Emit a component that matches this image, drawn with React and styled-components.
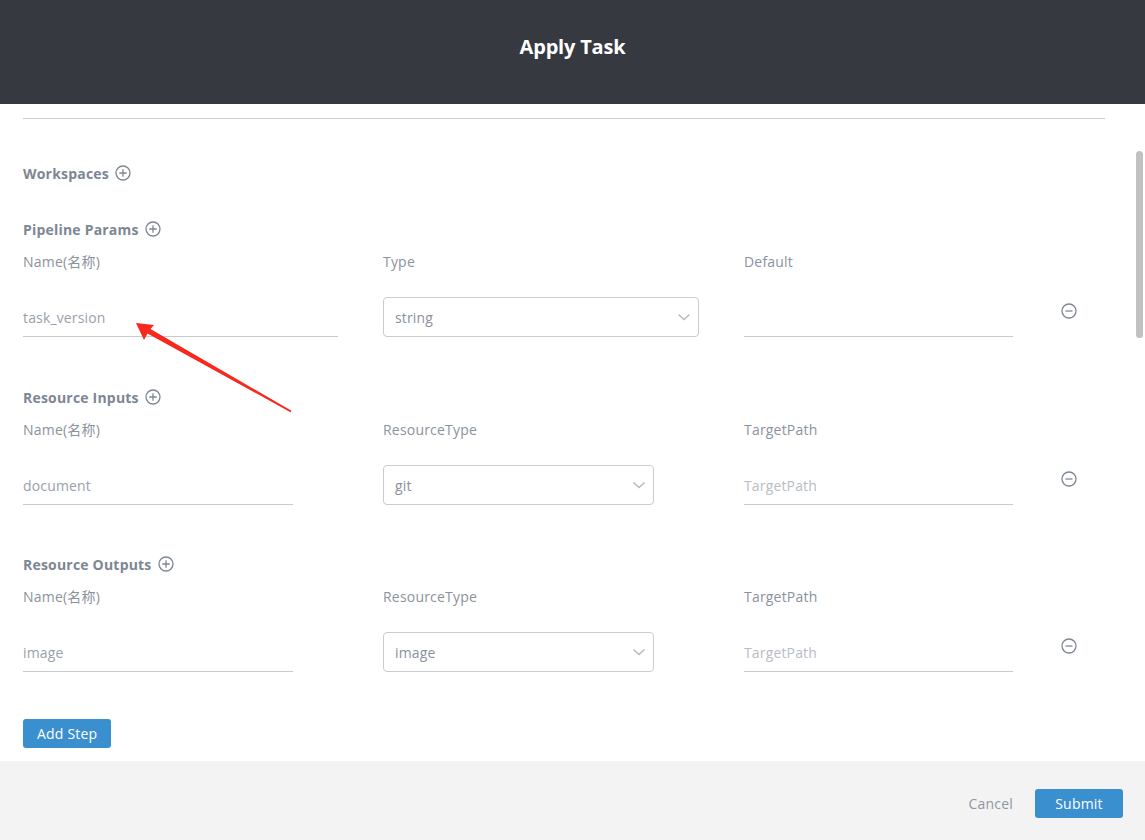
import React from "react";
import styled, { createGlobalStyle } from "styled-components";

const Global = createGlobalStyle`
  html, body { margin: 0; padding: 0; }
  body {
    font-family: "Open Sans", "Noto Sans CJK SC", "Noto Sans", sans-serif;
    background: #ffffff;
  }
  * { box-sizing: border-box; }
`;

const Page = styled.div`
  position: relative;
  width: 1145px;
  height: 840px;
  display: flex;
  flex-direction: column;
  overflow: hidden;
`;

const Header = styled.header`
  height: 104px;
  background: #36393f;
  display: flex;
  align-items: center;
  justify-content: center;
  padding-bottom: 12px;
`;

const Title = styled.h1`
  margin: 0;
  color: #ffffff;
  font-size: 20px;
  font-weight: 700;
  letter-spacing: -0.2px;
`;

const Body = styled.main`
  position: relative;
  height: 657px;
  background: #fff;
  padding: 14px 40px 0 23px;
`;

const Divider = styled.div`
  height: 1px;
  background: #c9ccd2;
  margin-bottom: 44px;
`;

const Section = styled.section`
  margin-bottom: ${(p) => p.$gap}px;
`;

const Heading = styled.div`
  display: flex;
  align-items: center;
  gap: 6px;
  height: 20px;
  font-size: 14px;
  font-weight: 700;
  letter-spacing: 0.2px;
  color: #7d8693;
  margin-bottom: 13px;
`;

const Grid = styled.div`
  display: grid;
  grid-template-columns: 360px 361px 317px 16px;
  align-items: center;
`;

const Label = styled.div`
  font-size: 14px;
  line-height: 20px;
  letter-spacing: 0.2px;
  color: #8b929d;
  margin-bottom: 25px;
`;

const LineInput = styled.div`
  width: ${(p) => p.$w}px;
  height: 40px;
  border-bottom: 1px solid #c7cad0;
  display: flex;
  align-items: center;
  font-size: 14px;
  letter-spacing: 0.15px;
  color: ${(p) => (p.$placeholder ? "#b8bcc3" : "#9aa0a9")};
  padding-top: 1px;
`;

const Select = styled.div`
  width: ${(p) => p.$w}px;
  height: 40px;
  border: 1px solid #c9ccd2;
  border-radius: 4px;
  display: flex;
  align-items: center;
  justify-content: space-between;
  padding: 0 7px 0 11px;
  font-size: 14px;
  letter-spacing: 0.15px;
  color: #8a919c;
`;

const RemoveBtn = styled.span`
  display: flex;
  align-self: start;
  margin-top: 6px;
  color: #7d8693;
`;

const PrimaryButton = styled.button`
  height: 29px;
  padding: 0 14px;
  border: none;
  border-radius: 3px;
  background: #3a8fcf;
  color: #fff;
  font-family: inherit;
  font-size: 14px;
  letter-spacing: 0.2px;
`;

const Footer = styled.footer`
  flex: 1;
  background: #f3f3f3;
  display: flex;
  align-items: center;
  justify-content: flex-end;
  gap: 22px;
  padding: 5px 22px 0 0;
`;

const CancelText = styled.span`
  font-size: 14px;
  letter-spacing: 0.2px;
  color: #8f96a0;
`;

const SubmitButton = styled(PrimaryButton)`
  width: 88px;
  padding: 0;
`;

const Thumb = styled.div`
  position: absolute;
  right: 2px;
  top: 47px;
  width: 7px;
  height: 187px;
  border-radius: 4px;
  background: #c1c1c1;
`;

const Overlay = styled.svg`
  position: absolute;
  left: 0;
  top: 0;
  pointer-events: none;
`;

const PlusIcon = () => (
  <svg width="16" height="16" viewBox="0 0 16 16">
    <circle cx="8" cy="8" r="7" fill="none" stroke="currentColor" strokeWidth="1.3" />
    <path d="M8 4.3v7.4M4.3 8h7.4" stroke="currentColor" strokeWidth="1.3" />
  </svg>
);

const MinusIcon = () => (
  <svg width="16" height="16" viewBox="0 0 16 16">
    <circle cx="8" cy="8" r="7" fill="none" stroke="currentColor" strokeWidth="1.3" />
    <path d="M4.5 8h7" stroke="currentColor" strokeWidth="1.3" />
  </svg>
);

const Chevron = () => (
  <svg width="14" height="10" viewBox="0 0 14 10">
    <path d="M1.5 2.5l5.5 5 5.5-5" fill="none" stroke="#b7bcc4" strokeWidth="1.6" />
  </svg>
);

const rows = [
  {
    title: "Pipeline Params",
    labels: ["Name(名称)", "Type", "Default"],
    name: "task_version",
    nameW: 315,
    select: "string",
    selW: 316,
    third: "",
    gap: 50,
  },
  {
    title: "Resource Inputs",
    labels: ["Name(名称)", "ResourceType", "TargetPath"],
    name: "document",
    nameW: 270,
    select: "git",
    selW: 271,
    third: "TargetPath",
    gap: 49,
  },
  {
    title: "Resource Outputs",
    labels: ["Name(名称)", "ResourceType", "TargetPath"],
    name: "image",
    nameW: 270,
    select: "image",
    selW: 271,
    third: "TargetPath",
    gap: 47,
  },
];

export default function App() {
  return (
    <>
      <Global />
      <Page>
        <Header>
          <Title>Apply Task</Title>
        </Header>
        <Body>
          <Divider />
          <Section $gap={36}>
            <Heading>
              Workspaces <PlusIcon />
            </Heading>
          </Section>
          {rows.map((r) => (
            <Section key={r.title} $gap={r.gap}>
              <Heading>
                {r.title} <PlusIcon />
              </Heading>
              <Grid>
                {r.labels.map((l) => (
                  <Label key={l}>{l}</Label>
                ))}
              </Grid>
              <Grid>
                <LineInput $w={r.nameW}>{r.name}</LineInput>
                <Select $w={r.selW}>
                  {r.select}
                  <Chevron />
                </Select>
                <LineInput $w={269} $placeholder>
                  {r.third}
                </LineInput>
                <RemoveBtn>
                  <MinusIcon />
                </RemoveBtn>
              </Grid>
            </Section>
          ))}
          <PrimaryButton>Add Step</PrimaryButton>
          <Thumb />
        </Body>
        <Footer>
          <CancelText>Cancel</CancelText>
          <SubmitButton>Submit</SubmitButton>
        </Footer>
        <Overlay width="1145" height="840" viewBox="0 0 1145 840">
          <polygon
            points="136,323 154,325 150.5,329 291.5,410.8 290.5,412.2 147.5,333.5 144,340"
            fill="#f7281d"
          />
        </Overlay>
      </Page>
    </>
  );
}
